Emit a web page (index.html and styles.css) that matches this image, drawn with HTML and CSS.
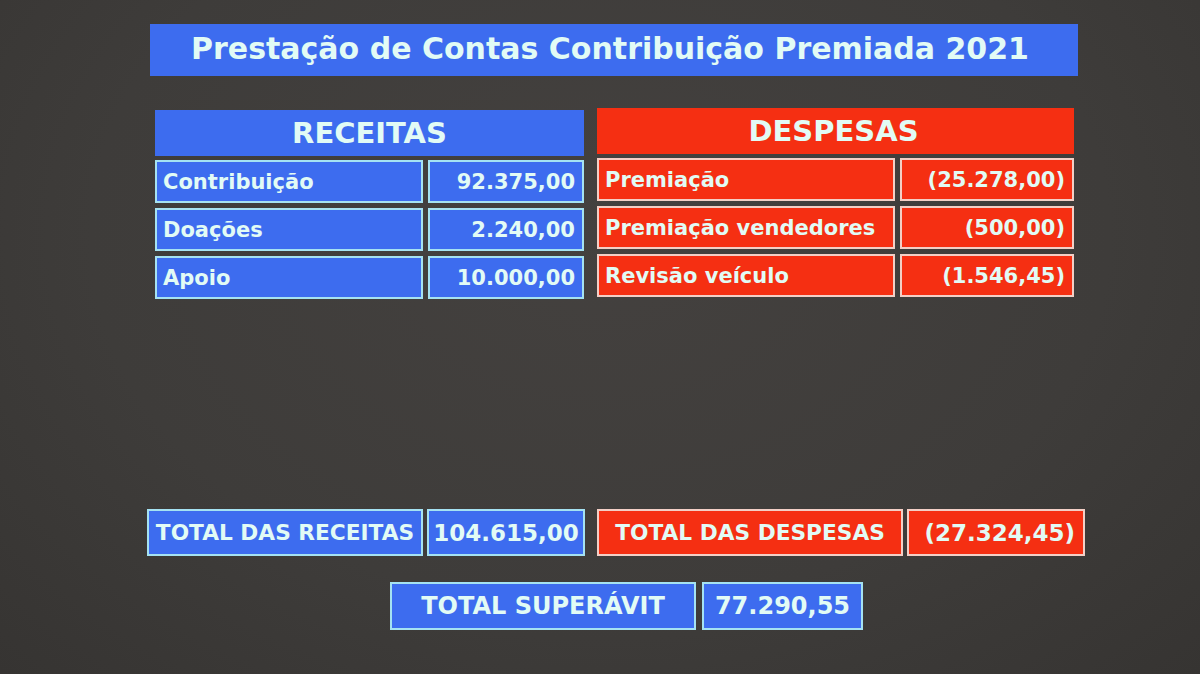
FILE: index.html
```html
<!DOCTYPE html>
<html lang="pt-BR">
<head>
<meta charset="utf-8">
<title>Prestação de Contas Contribuição Premiada 2021</title>
<link rel="stylesheet" href="styles.css">
</head>
<body>
<div class="slide">
  <h1 class="title">Prestação de Contas Contribuição Premiada 2021</h1>
  <div class="tables">
    <section class="table receitas">
      <div class="head">RECEITAS</div>
      <div class="row"><div class="cell label">Contribuição</div><div class="cell value">92.375,00</div></div>
      <div class="row"><div class="cell label">Doações</div><div class="cell value">2.240,00</div></div>
      <div class="row"><div class="cell label">Apoio</div><div class="cell value">10.000,00</div></div>
    </section>
    <section class="table despesas">
      <div class="head">DESPESAS</div>
      <div class="row"><div class="cell label">Premiação</div><div class="cell value">(25.278,00)</div></div>
      <div class="row"><div class="cell label">Premiação vendedores</div><div class="cell value">(500,00)</div></div>
      <div class="row"><div class="cell label">Revisão veículo</div><div class="cell value">(1.546,45)</div></div>
    </section>
  </div>
  <div class="totals">
    <div class="total receitas">
      <div class="cell label">TOTAL DAS RECEITAS</div>
      <div class="cell value">104.615,00</div>
    </div>
    <div class="total despesas">
      <div class="cell label">TOTAL DAS DESPESAS</div>
      <div class="cell value">(27.324,45)</div>
    </div>
  </div>
  <div class="superavit">
    <div class="cell label">TOTAL SUPERÁVIT</div>
    <div class="cell value">77.290,55</div>
  </div>
</div>
</body>
</html>
```
FILE: styles.css
```css
html, body {
  margin: 0;
  padding: 0;
}
body {
  width: 1200px;
  height: 674px;
  overflow: hidden;
  background: radial-gradient(ellipse at 50% 35%, #44413f 0%, #3e3c3a 60%, #363432 100%);
  font-family: "DejaVu Sans", "Liberation Sans", sans-serif;
  font-weight: bold;
  color: #e2fbf5;
}
.slide {
  display: flex;
  flex-direction: column;
  padding-top: 24px;
}
.title {
  margin: 0 0 0 150px;
  width: 928px;
  height: 52px;
  line-height: 50px;
  background: #3d6cef;
  font-size: 30px;
  font-weight: bold;
  text-align: center;
  text-indent: -8px;
}
.tables {
  display: flex;
  gap: 13px;
  margin: 34px 0 0 155px;
}
.table {
  display: flex;
  flex-direction: column;
  gap: 5px;
}
.table.receitas { width: 429px; }
.table.despesas { width: 477px; margin-top: -2px; }
.head {
  height: 46px;
  line-height: 46px;
  text-align: center;
  font-size: 29px;
  margin-bottom: -1px;
}
.receitas .head { background: #3d6cef; }
.despesas .head { background: #f52f12; text-indent: -4px; }
.row {
  display: flex;
  gap: 5px;
  height: 43px;
}
.cell {
  box-sizing: border-box;
  display: flex;
  align-items: center;
  border: 2px solid #a5e2f2;
  background: #3d6cef;
  font-size: 21px;
  white-space: nowrap;
}
.despesas .cell {
  background: #f52f12;
  border-color: #f3cfc6;
}
.cell.label { padding-left: 6px; }
.cell.value { justify-content: flex-end; padding-right: 7px; }
.receitas .row .label { width: 268px; }
.receitas .row .value { width: 156px; }
.despesas .row .label { width: 298px; }
.despesas .row .value { width: 174px; }

.totals {
  display: flex;
  gap: 12px;
  margin: 210px 0 0 147px;
}
.total {
  display: flex;
  gap: 4px;
  height: 47px;
}
.total .cell { font-size: 21.7px; }
.total .value { font-size: 23px; }
.total .label { justify-content: center; padding-left: 0; }
.total.receitas .label { width: 276px; }
.total.receitas .value { width: 158px; justify-content: center; padding-right: 0; }
.total.despesas .label { width: 306px; }
.total.despesas .value { width: 178px; justify-content: flex-end; padding-right: 8px; }

.superavit {
  display: flex;
  gap: 6px;
  height: 48px;
  margin: 26px 0 0 390px;
}
.superavit .cell { font-size: 24px; }
.superavit .label { width: 306px; justify-content: center; padding-left: 0; }
.superavit .value { width: 161px; justify-content: center; padding-right: 0; }
```
